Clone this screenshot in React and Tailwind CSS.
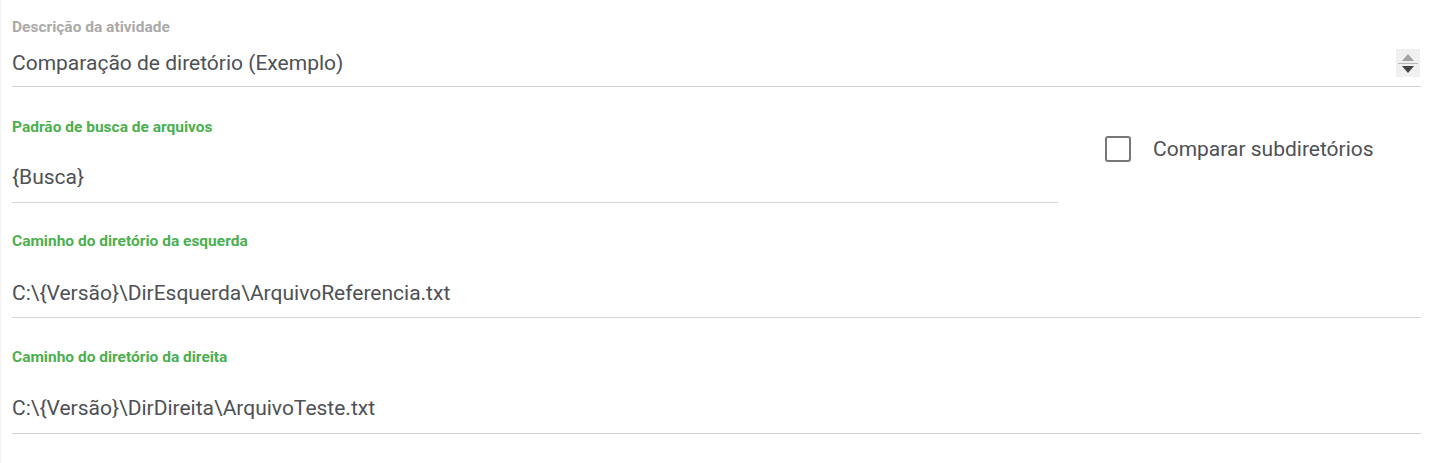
import { useState } from 'react';

function FieldLabel({ children, active }) {
  return (
    <div className={`h-4 text-[15.5px] font-bold leading-4 ${active ? 'text-[#4caf50]' : 'text-[#aaaaaa]'}`}>
      {children}
    </div>
  );
}

function Spinner() {
  return (
    <div className="mr-px flex h-7 w-6 flex-col items-center justify-center bg-[#f0f0f0]">
      <svg width="12" height="7" viewBox="0 0 12 7">
        <path d="M6 0 L12 7 L0 7 Z" fill="#a3a3a3" />
      </svg>
      <div className="my-[2px] h-px w-5 bg-[#b5b5b5]" />
      <svg width="12" height="7" viewBox="0 0 12 7">
        <path d="M0 0 L12 0 L6 7 Z" fill="#444444" />
      </svg>
    </div>
  );
}

export default function App() {
  const [subdirs, setSubdirs] = useState(false);

  return (
    <div className="min-h-[463px] w-full border-l border-[#f3f3f3] bg-white pl-[11px] pr-3 font-['Roboto',sans-serif]">
      {/* descrição */}
      <div className="w-[1409px] pt-[19px]">
        <FieldLabel>Descrição da atividade</FieldLabel>
        <div className="flex h-[52px] items-center justify-between border-b border-[#d4d4d4] pt-[5px]">
          <span className="text-[21px] leading-7 text-[#4d5156]">Comparação de diretório (Exemplo)</span>
          <Spinner />
        </div>
      </div>

      <div className="flex">
        <div className="w-[1046px] pt-8">
          <FieldLabel active>Padrão de busca de arquivos</FieldLabel>
          <div className="flex h-[68px] items-center border-b border-[#d4d4d4] pt-[17px]">
            <span className="text-[21px] leading-7 text-[#4d5156]">{'{Busca}'}</span>
          </div>
        </div>
        <div className="pl-[47px] pt-[48px]">
          <label className="flex cursor-pointer items-center gap-[22px]" onClick={() => setSubdirs(!subdirs)}>
            <span className="flex h-[26px] w-[26px] items-center justify-center rounded-[3px] border-2 border-[#777777]">
              {subdirs && <span className="h-3 w-3 bg-[#4caf50]" />}
            </span>
            <span className="text-[21px] leading-7 text-[#4d5156]">Comparar subdiretórios</span>
          </label>
        </div>
      </div>

      <div className="w-[1409px] pt-[30px]">
        <FieldLabel active>Caminho do diretório da esquerda</FieldLabel>
        <div className="flex h-[69px] items-center border-b border-[#d4d4d4] pt-[19px]">
          <span className="text-[21px] leading-7 text-[#4d5156]">C:\{'{'}Versão{'}'}\DirEsquerda\ArquivoReferencia.txt</span>
        </div>
      </div>

      <div className="w-[1409px] pt-[31px]">
        <FieldLabel active>Caminho do diretório da direita</FieldLabel>
        <div className="flex h-[69px] items-center border-b border-[#d4d4d4] pt-[17px]">
          <span className="text-[21px] leading-7 text-[#4d5156]">C:\{'{'}Versão{'}'}\DirDireita\ArquivoTeste.txt</span>
        </div>
      </div>
    </div>
  );
}
